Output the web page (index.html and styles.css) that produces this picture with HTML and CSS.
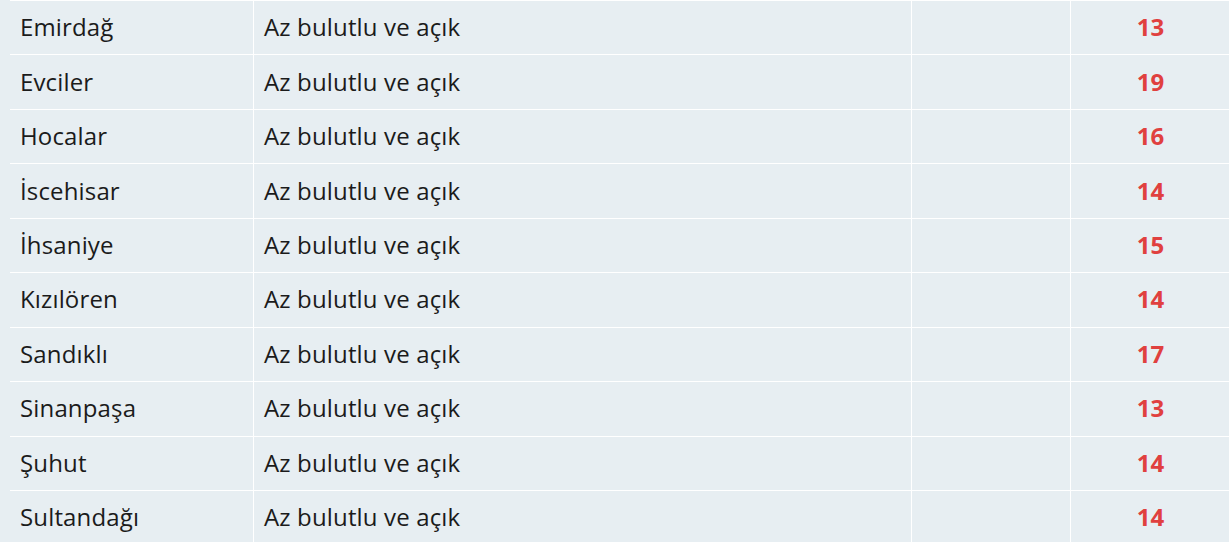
FILE: index.html
```html
<!DOCTYPE html>
<html lang="tr">
<head>
<meta charset="utf-8">
<link rel="stylesheet" href="styles.css">
</head>
<body>
<div class="table">
  <div class="row"><div class="cell name">Emirdağ</div><div class="cell">Az bulutlu ve açık</div><div class="cell"></div><div class="cell temp">13</div></div>
  <div class="row"><div class="cell name">Evciler</div><div class="cell">Az bulutlu ve açık</div><div class="cell"></div><div class="cell temp">19</div></div>
  <div class="row"><div class="cell name">Hocalar</div><div class="cell">Az bulutlu ve açık</div><div class="cell"></div><div class="cell temp">16</div></div>
  <div class="row"><div class="cell name">İscehisar</div><div class="cell">Az bulutlu ve açık</div><div class="cell"></div><div class="cell temp">14</div></div>
  <div class="row"><div class="cell name">İhsaniye</div><div class="cell">Az bulutlu ve açık</div><div class="cell"></div><div class="cell temp">15</div></div>
  <div class="row"><div class="cell name">Kızılören</div><div class="cell">Az bulutlu ve açık</div><div class="cell"></div><div class="cell temp">14</div></div>
  <div class="row"><div class="cell name">Sandıklı</div><div class="cell">Az bulutlu ve açık</div><div class="cell"></div><div class="cell temp">17</div></div>
  <div class="row"><div class="cell name">Sinanpaşa</div><div class="cell">Az bulutlu ve açık</div><div class="cell"></div><div class="cell temp">13</div></div>
  <div class="row"><div class="cell name">Şuhut</div><div class="cell">Az bulutlu ve açık</div><div class="cell"></div><div class="cell temp">14</div></div>
  <div class="row"><div class="cell name">Sultandağı</div><div class="cell">Az bulutlu ve açık</div><div class="cell"></div><div class="cell temp">14</div></div>
</div>
</body>
</html>
```

FILE: styles.css
```css
html, body {
  margin: 0;
  padding: 0;
  background: #e7eef2;
}
body {
  padding-left: 10px;
  font-family: "Open Sans", "Liberation Sans", sans-serif;
  font-size: 24px;
  letter-spacing: 0.15px;
  color: #1b1b1b;
}
.table {
  display: flex;
  flex-direction: column;
}
.row {
  display: grid;
  grid-template-columns: 243px 658px 159px 160px;
  height: 54.44px;
  box-sizing: border-box;
  border-top: 1px solid #ffffff;
}
.cell {
  display: flex;
  align-items: center;
  padding-left: 10px;
  padding-bottom: 2px;
  box-sizing: border-box;
  border-left: 1px solid #ffffff;
  white-space: nowrap;
}
.cell.name {
  border-left: none;
}
.cell.temp {
  justify-content: center;
  padding-left: 0;
  font-weight: 700;
  color: #e0403f;
}
```
